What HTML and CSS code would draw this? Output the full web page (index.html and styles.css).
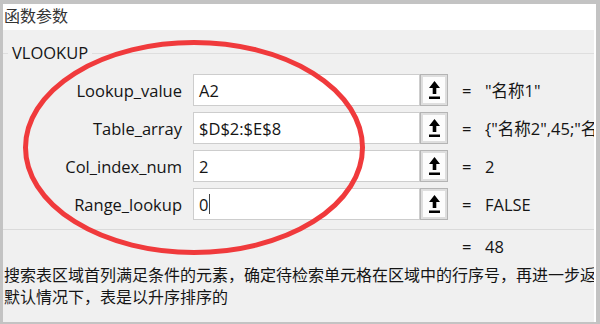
FILE: index.html
```html
<!DOCTYPE html>
<html>
<head>
<meta charset="utf-8">
<link rel="stylesheet" href="styles.css">
</head>
<body>
<div class="window">
  <div class="title">函数参数</div>
  <div class="panel">
    <div class="group-head"><span class="lead"></span><span class="fname">VLOOKUP</span><span class="rule"></span></div>
    <div class="rows">
      <div class="row">
        <span class="label">Lookup_value</span>
        <span class="input">A2</span>
        <span class="btn"><svg width="11" height="19" viewBox="0 0 11 19"><polygon points="5.5,0 11,7 7.3,7 7.3,13 3.7,13 3.7,7 0,7" fill="#000"/><rect x="0" y="15.5" width="11" height="2.5" fill="#000"/></svg></span>
        <span class="eq">=</span>
        <span class="val">"名称1"</span>
      </div>
      <div class="row">
        <span class="label">Table_array</span>
        <span class="input">$D$2:$E$8</span>
        <span class="btn"><svg width="11" height="19" viewBox="0 0 11 19"><polygon points="5.5,0 11,7 7.3,7 7.3,13 3.7,13 3.7,7 0,7" fill="#000"/><rect x="0" y="15.5" width="11" height="2.5" fill="#000"/></svg></span>
        <span class="eq">=</span>
        <span class="val">{"名称2",45;"名称3",48;"名称1",48}</span>
      </div>
      <div class="row">
        <span class="label">Col_index_num</span>
        <span class="input">2</span>
        <span class="btn"><svg width="11" height="19" viewBox="0 0 11 19"><polygon points="5.5,0 11,7 7.3,7 7.3,13 3.7,13 3.7,7 0,7" fill="#000"/><rect x="0" y="15.5" width="11" height="2.5" fill="#000"/></svg></span>
        <span class="eq">=</span>
        <span class="val">2</span>
      </div>
      <div class="row">
        <span class="label">Range_lookup</span>
        <span class="input">0<span class="caret"></span></span>
        <span class="btn"><svg width="11" height="19" viewBox="0 0 11 19"><polygon points="5.5,0 11,7 7.3,7 7.3,13 3.7,13 3.7,7 0,7" fill="#000"/><rect x="0" y="15.5" width="11" height="2.5" fill="#000"/></svg></span>
        <span class="eq">=</span>
        <span class="val">FALSE</span>
      </div>
    </div>
    <div class="sep"></div>
    <div class="result"><span class="eq">=</span><span class="res">48</span></div>
    <div class="desc">搜索表区域首列满足条件的元素，确定待检索单元格在区域中的行序号，再进一步返回选定单元格的值。</div>
    <div class="desc">默认情况下，表是以升序排序的</div>
  </div>
</div>
<svg class="mark" width="600" height="324" viewBox="0 0 600 324"><ellipse cx="194" cy="147.5" rx="168.5" ry="105" fill="none" stroke="#f03a3c" stroke-width="5"/></svg>
</body>
</html>
```
FILE: styles.css
```css
html, body {
  margin: 0;
  padding: 0;
}
body {
  width: 600px;
  height: 324px;
  background: #c3c3c3;
  overflow: hidden;
  position: relative;
  font-family: "Open Sans", "Noto Sans CJK SC", sans-serif;
  font-size: 16.5px;
  color: #151515;
}
.window {
  margin: 4px 4px 0 3px;
  width: 593px;
  height: 318px;
  background: #fff;
  display: flex;
  flex-direction: column;
}
.title {
  height: 26px;
  line-height: 23px;
  padding-left: 1px;
  font-size: 16px;
  font-family: "Noto Sans CJK SC", sans-serif;
  color: #333;
  overflow: hidden;
}
.panel {
  flex: 1;
  margin-right: 2px;
  background: #f0f0f0;
  padding-top: 13px;
  overflow: hidden;
}
.group-head {
  display: flex;
  align-items: center;
  height: 20px;
}
.lead {
  width: 5px;
  height: 1px;
  background: #dedede;
  margin-right: 4px;
}
.fname {
  line-height: 20px;
  padding-right: 4px;
}
.rule {
  flex: 1;
  height: 1px;
  background: #dedede;
}
.rows {
  margin-top: 11px;
  display: flex;
  flex-direction: column;
  gap: 6px;
}
.row {
  display: flex;
  align-items: center;
  height: 32px;
}
.label {
  width: 179px;
  text-align: right;
  margin-right: 11px;
  white-space: nowrap;
}
.input {
  width: 227px;
  height: 32px;
  box-sizing: border-box;
  border: 1px solid #cdcdcd;
  background: #fff;
  padding-left: 5px;
  line-height: 29px;
  display: flex;
  align-items: center;
}
.caret {
  display: inline-block;
  width: 1px;
  height: 20px;
  background: #444;
  margin-left: 1px;
}
.btn {
  width: 28px;
  height: 32px;
  box-sizing: border-box;
  border: 1px solid #b4b4b4;
  background: #fcfcfc;
  box-shadow: inset 0 0 0 2px #dedede;
  display: flex;
  align-items: center;
  justify-content: center;
}
.eq {
  margin-left: 14px;
  width: 9px;
  text-align: center;
}
.val {
  margin-left: 14px;
  white-space: nowrap;
  overflow: hidden;
  flex: 1;
}
.sep {
  margin-top: 9px;
  height: 1px;
  background: #dadada;
}
.result {
  margin-top: 7px;
  height: 20px;
  line-height: 20px;
  display: flex;
  padding-left: 445px;
}
.res {
  margin-left: 14px;
  white-space: nowrap;
}
.desc {
  font-family: "Noto Sans CJK SC", sans-serif;
  font-size: 16px;
  line-height: 22px;
  white-space: nowrap;
  overflow: hidden;
  padding-left: 1px;
}
.result + .desc {
  margin-top: 6px;
}
.mark {
  position: absolute;
  left: 0;
  top: 0;
}
```
